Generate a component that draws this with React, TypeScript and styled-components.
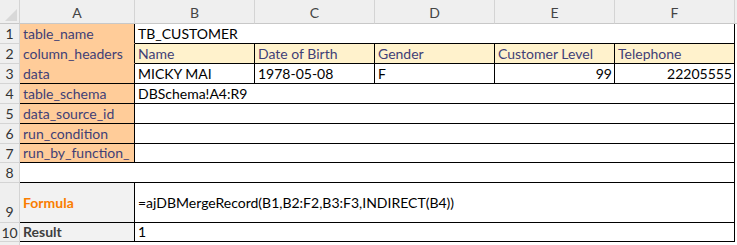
import React from "react";
import styled, { createGlobalStyle } from "styled-components";

const Global = createGlobalStyle`
  html, body { margin: 0; padding: 0; background: #ffffff; }
  body { font-family: Lato, "Liberation Sans", sans-serif; overflow: hidden; }
`;

const BLACK = "#000000";
const GRID = "#d4d4d4";
const HEAD_LINE = "#c8c8c8";

const Sheet = styled.div`
  display: grid;
  grid-template-columns: 20px 115px repeat(5, 120px) 1fr;
  grid-template-rows: 24px 20px 20px 20px 20px 20px 20px 19px 20px 40px 19px 20px;
  width: 737px;
  height: 245px;
  overflow: hidden;
  font-size: 14px;
  color: #000;
`;

const Corner = styled.div`
  background: #efefef;
  border-right: 1px solid ${GRID};
  border-bottom: 1px solid ${HEAD_LINE};
  position: relative;
  &::after {
    content: "";
    position: absolute;
    right: 2px;
    bottom: 2px;
    width: 0;
    height: 0;
    border-left: 12px solid transparent;
    border-bottom: 12px solid #d8d8d8;
  }
`;

const ColHead = styled.div<{ $last?: boolean }>`
  background: #efefef;
  border-right: 1px solid ${(p) => (p.$last ? "transparent" : GRID)};
  border-bottom: 1px solid ${HEAD_LINE};
  display: flex;
  align-items: center;
  justify-content: center;
  color: #444;
  font-size: 14px;
  padding-top: 1px;
`;

const RowHead = styled.div<{ $tall?: boolean }>`
  background: #efefef;
  border-right: 1px solid ${GRID};
  border-bottom: 1px solid ${GRID};
  display: flex;
  align-items: ${(p) => (p.$tall ? "flex-end" : "center")};
  justify-content: center;
  padding-bottom: ${(p) => (p.$tall ? "2px" : "0")};
  color: #333;
  font-size: 14px;
  box-sizing: border-box;
`;

type CellProps = {
  $span?: number;
  $fill?: string;
  $color?: string;
  $bold?: boolean;
  $right?: boolean;
  $bottomColor?: string;
  $rightColor?: string;
  $center?: boolean;
};

const Cell = styled.div<CellProps>`
  grid-column: span ${(p) => p.$span ?? 1};
  background: ${(p) => p.$fill ?? "#ffffff"};
  color: ${(p) => p.$color ?? "#000"};
  font-weight: ${(p) => (p.$bold ? 700 : 400)};
  border-right: 1px solid ${(p) => p.$rightColor ?? BLACK};
  border-bottom: 1px solid ${(p) => p.$bottomColor ?? BLACK};
  display: flex;
  align-items: ${(p) => (p.$center ? "center" : "flex-end")};
  justify-content: ${(p) => (p.$right ? "flex-end" : "flex-start")};
  padding: 0 ${(p) => (p.$right ? "2px" : "0")} ${(p) => (p.$center ? "0" : "1px")} ${(p) => (p.$right ? "0" : "3px")};
  white-space: nowrap;
  overflow: hidden;
  line-height: 17px;
  min-width: 0;
`;

const Filler = styled.div`
  background: #ffffff;
`;

const HeadFiller = styled.div`
  background: #efefef;
  border-bottom: 1px solid ${HEAD_LINE};
`;

const INPUT_FILL = "#ffcc99";
const INPUT_TEXT = "#3f3f76";
const HEAD_FILL = "#fff2cc";
const CALC_FILL = "#f2f2f2";

const cols = ["A", "B", "C", "D", "E", "F"];

export default function App() {
  return (
    <>
      <Global />
      <Sheet>
        <Corner />
        {cols.map((c) => (
          <ColHead key={c}>{c}</ColHead>
        ))}
        <HeadFiller />

        {/* Row 1 */}
        <RowHead>1</RowHead>
        <Cell $fill={INPUT_FILL} $color={INPUT_TEXT} $bottomColor={INPUT_FILL}>table_name</Cell>
        <Cell $span={5}>TB_CUSTOMER</Cell>
        <Filler />

        {/* Row 2 */}
        <RowHead>2</RowHead>
        <Cell $fill={INPUT_FILL} $color={INPUT_TEXT} $bottomColor={INPUT_FILL}>column_headers</Cell>
        <Cell $fill={HEAD_FILL} $color={INPUT_TEXT}>Name</Cell>
        <Cell $fill={HEAD_FILL} $color={INPUT_TEXT}>Date of Birth</Cell>
        <Cell $fill={HEAD_FILL} $color={INPUT_TEXT}>Gender</Cell>
        <Cell $fill={HEAD_FILL} $color={INPUT_TEXT}>Customer Level</Cell>
        <Cell $fill={HEAD_FILL} $color={INPUT_TEXT}>Telephone</Cell>
        <Filler />

        {/* Row 3 */}
        <RowHead>3</RowHead>
        <Cell $fill={INPUT_FILL} $color={INPUT_TEXT}>data</Cell>
        <Cell>MICKY MAI</Cell>
        <Cell>1978-05-08</Cell>
        <Cell>F</Cell>
        <Cell $right>99</Cell>
        <Cell $right>22205555</Cell>
        <Filler />

        {/* Row 4 */}
        <RowHead>4</RowHead>
        <Cell $fill={INPUT_FILL} $color={INPUT_TEXT}>table_schema</Cell>
        <Cell $span={5}>DBSchema!A4:R9</Cell>
        <Filler />

        {/* Row 5 */}
        <RowHead>5</RowHead>
        <Cell $fill={INPUT_FILL} $color={INPUT_TEXT}>data_source_id</Cell>
        <Cell $span={5} />
        <Filler />

        {/* Row 6 */}
        <RowHead>6</RowHead>
        <Cell $fill={INPUT_FILL} $color={INPUT_TEXT}>run_condition</Cell>
        <Cell $span={5} />
        <Filler />

        {/* Row 7 */}
        <RowHead>7</RowHead>
        <Cell $fill={INPUT_FILL} $color={INPUT_TEXT}>run_by_function_</Cell>
        <Cell $span={5} />
        <Filler />

        {/* Row 8 */}
        <RowHead>8</RowHead>
        <Cell $span={6} />
        <Filler />

        {/* Row 9 */}
        <RowHead $tall>9</RowHead>
        <Cell $fill={CALC_FILL} $color="#fa7d00" $bold $center>Formula</Cell>
        <Cell $span={5} $center>=ajDBMergeRecord(B1,B2:F2,B3:F3,INDIRECT(B4))</Cell>
        <Filler />

        {/* Row 10 */}
        <RowHead>10</RowHead>
        <Cell $fill={CALC_FILL} $color="#3f3f3f" $bold>Result</Cell>
        <Cell $span={5}>1</Cell>
        <Filler />

        {/* Row 11 (partially visible) */}
        <RowHead />
        <Filler />
        <Filler />
        <Filler />
        <Filler />
        <Filler />
        <Filler />
        <Filler />
      </Sheet>
    </>
  );
}
